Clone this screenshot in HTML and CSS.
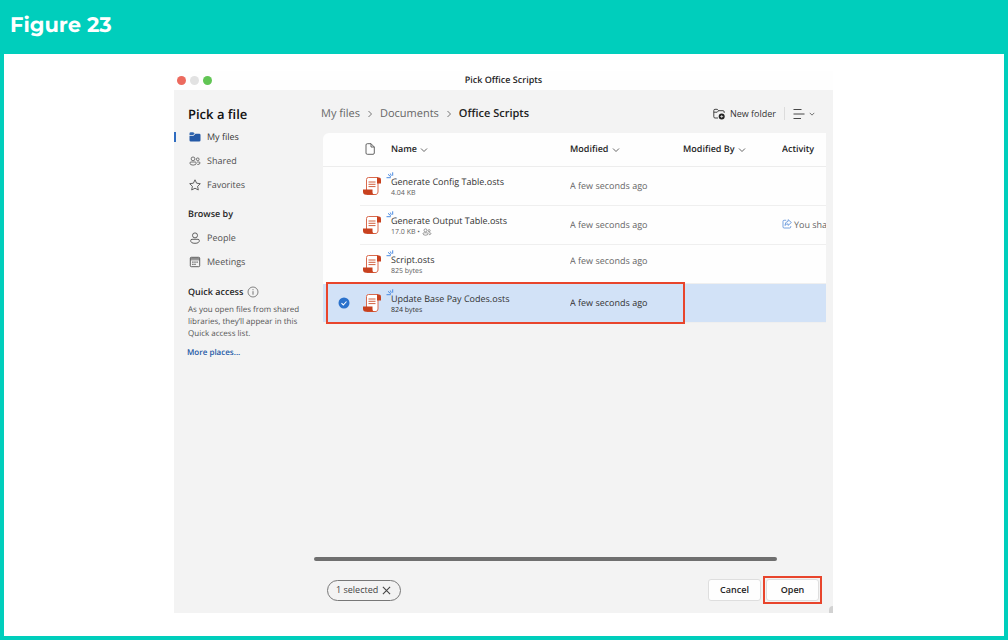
FILE: index.html
```html
<!DOCTYPE html>
<html lang="en">
<head>
<meta charset="utf-8">
<title>Figure 23</title>
<meta name="viewport" content="width=device-width, initial-scale=1">
<link rel="stylesheet" href="styles.css">
</head>
<body>
<svg class="defs" width="0" height="0" aria-hidden="true">
  <symbol id="chevron" viewBox="0 0 8 8"><path d="M1 2.500 4 5.500 7 2.500" fill="none" stroke="currentColor" stroke-width=".9"/></symbol>
  <symbol id="script" viewBox="0 0 20 20">
    <path d="M4.500 14V3.500q0-2 2-2H16v14.500q0 2-2 2.500H5z" fill="#fff" stroke="#d9694c" stroke-width="1"/>
    <path d="M15 1.500h2q2 0 2 2v4H15z" fill="#c8411f"/>
    <path d="M1 13.500h9.500v2.500q0 2.800 2.800 2.800H4q-3 0-3-3z" fill="#c8411f"/>
    <path d="M6.500 6h7M6.500 8.300h7M6.500 10.600h7" stroke="#d0603f" stroke-width="1"/>
  </symbol>
  <symbol id="spark" viewBox="0 0 8 8"><path d="M.5 5.700h4.300M2 2.300l2.800 2.500M4.300 1.500l1 2.300M6.700.3v3.400" fill="none" stroke="#4a8ae0" stroke-width="1"/></symbol>
  <symbol id="people" viewBox="0 0 14 12"><g fill="none" stroke="currentColor" stroke-width=".9"><circle cx="4.700" cy="3.500" r="2.200"/><circle cx="10.200" cy="4" r="1.600"/><path d="M2.300 7.200h5q1.200 0 1.200 1.200 0 2.400-3.700 2.400T1 8.400q0-1.200 1.300-1.200zM9.500 7.200h2q1.400 0 1.400 1.100 0 1.800-3.200 1.800"/></g></symbol>
</svg>
<main class="figure">
  <h1 class="figure-title">Figure 23</h1>
  <div class="figure-body">
    <section class="window" aria-label="Pick Office Scripts">
      <header class="titlebar">
        <div class="lights"><i class="light red"></i><i class="light gray"></i><i class="light green"></i></div>
        <div class="window-title">Pick Office Scripts</div>
      </header>
      <div class="content">
        <nav class="sidebar">
          <h2 class="side-title">Pick a file</h2>
          <a class="nav-link current" href="#"><svg class="nav-icon" viewBox="0 0 12 12"><path d="M.5 2.500q0-1.300 1.300-1.300h2.400L5.700 2.600 4.200 4H.5z" fill="#2f66b0"/><path d="M.5 4.700h4L6.500 2.700h3.700q1.300 0 1.300 1.300v5.200q0 1.300-1.300 1.300H1.800Q.5 10.500.5 9.200z" fill="#2459a6"/></svg>My files</a>
          <a class="nav-link" href="#"><svg class="nav-icon" viewBox="0 0 14 12"><use href="#people"/></svg>Shared</a>
          <a class="nav-link" href="#"><svg class="nav-icon" viewBox="0 0 12 12"><path d="m6 .8 1.600 3.400 3.700.5-2.700 2.600.7 3.700L6 9.200 2.700 11l.7-3.700L.7 4.700l3.700-.5z" fill="none" stroke="currentColor" stroke-width=".9" stroke-linejoin="round"/></svg>Favorites</a>
          <h3 class="side-heading">Browse by</h3>
          <a class="nav-link" href="#"><svg class="nav-icon" viewBox="0 0 12 12"><g fill="none" stroke="currentColor" stroke-width=".9"><circle cx="6" cy="3.400" r="2.500"/><path d="M3 7.300h6q1.300 0 1.300 1.300 0 2.700-4.300 2.700T1.700 8.600Q1.700 7.300 3 7.300z"/></g></svg>People</a>
          <a class="nav-link" href="#"><svg class="nav-icon" viewBox="0 0 12 12"><rect x="1.300" y="1.300" width="9.400" height="9.400" rx="1" fill="none" stroke="currentColor" stroke-width=".9"/><path d="M1.300 2.300h9.400M1.300 3.800h9.400" stroke="currentColor" stroke-width=".8"/><path d="M3.300 6.200h5.500M3.300 8.400h3.800" stroke="currentColor" stroke-width="1.200" stroke-dasharray="1.200 .9"/></svg>Meetings</a>
          <h3 class="side-heading quick">Quick access <svg class="info" viewBox="0 0 12 12"><circle cx="6" cy="6" r="5" fill="none" stroke="currentColor" stroke-width=".8"/><path d="M6 5.200v3.500M6 3.200v1" stroke="currentColor" stroke-width=".9"/></svg></h3>
          <p class="hint">As you open files from shared libraries, they’ll appear in this Quick access list.</p>
          <a class="more" href="#">More places...</a>
        </nav>
        <div class="main">
          <div class="toolbar">
            <nav class="crumbs" aria-label="Breadcrumb">
              <a href="#">My files</a><svg class="sep" viewBox="0 0 8 8"><path d="M2.500 1 5.500 4 2.500 7" fill="none" stroke="currentColor" stroke-width=".9"/></svg>
              <a href="#">Documents</a><svg class="sep" viewBox="0 0 8 8"><path d="M2.500 1 5.500 4 2.500 7" fill="none" stroke="currentColor" stroke-width=".9"/></svg>
              <span class="here">Office Scripts</span>
            </nav>
            <div class="actions">
              <button class="tool" type="button"><svg class="nav-icon" viewBox="0 0 12 12"><path d="M5 10H2Q.8 10 .8 8.800V2.500Q.8 1.300 2 1.300h2.200L5.700 2.700H10q1.200 0 1.200 1.200v1M.8 4.200h3.400l1.500-1.500" fill="none" stroke="currentColor" stroke-width=".9"/><circle cx="8.700" cy="8.500" r="3" fill="#222"/><path d="M8.700 7v3M7.200 8.500h3" stroke="#eee" stroke-width=".7"/></svg>New folder</button>
              <button class="tool view" type="button" aria-label="View options"><svg class="lines" viewBox="0 0 12 12"><path d="M.5 1.500h8M.5 6h11M.5 10.500h7.500" stroke="currentColor" stroke-width=".9"/></svg><svg class="tiny" viewBox="0 0 8 8"><use href="#chevron"/></svg></button>
            </div>
          </div>
          <div class="panel">
            <table class="files">
              <colgroup><col class="c-check"><col class="c-icon"><col class="c-name"><col class="c-mod"><col class="c-by"><col></colgroup>
              <thead><tr>
                <th></th>
                <th><svg class="page" viewBox="0 0 12 12"><path d="M2 2q0-1.300 1.300-1.300H7L10.300 4v6q0 1.300-1.300 1.300H3.300Q2 11.300 2 10zM7 .7V4h3.300" fill="none" stroke="currentColor" stroke-width=".9"/></svg></th>
                <th>Name <svg class="sort" viewBox="0 0 8 8"><use href="#chevron"/></svg></th>
                <th>Modified <svg class="sort" viewBox="0 0 8 8"><use href="#chevron"/></svg></th>
                <th>Modified By <svg class="sort" viewBox="0 0 8 8"><use href="#chevron"/></svg></th>
                <th>Activity</th>
              </tr></thead>
              <tbody>
                <tr><td></td><td><svg class="script"><use href="#script"/></svg></td><td class="name"><svg class="spark"><use href="#spark"/></svg><div class="file">Generate Config Table.osts</div><div class="meta">4.04 KB</div></td><td>A few seconds ago</td><td></td><td></td></tr>
                <tr><td></td><td><svg class="script"><use href="#script"/></svg></td><td class="name"><svg class="spark"><use href="#spark"/></svg><div class="file">Generate Output Table.osts</div><div class="meta">17.0 KB • <svg class="shared"><use href="#people"/></svg></div></td><td>A few seconds ago</td><td></td><td class="activity"><svg class="share" viewBox="0 0 12 12"><path d="M5 1.500H2.500Q1.200 1.500 1.200 2.800v6.700q0 1.300 1.300 1.300h6.700q1.300 0 1.300-1.300V8.500" fill="none" stroke="#4d86d6" stroke-width=".9"/><path d="M7.300.8v2Q3.600 3.300 3.500 7.800 5 5.800 7.300 5.800v1.900l4-3.500z" fill="none" stroke="#4d86d6" stroke-width=".9" stroke-linejoin="round"/></svg>You sha</td></tr>
                <tr><td></td><td><svg class="script"><use href="#script"/></svg></td><td class="name"><svg class="spark"><use href="#spark"/></svg><div class="file">Script.osts</div><div class="meta">825 bytes</div></td><td class="high">A few seconds ago</td><td></td><td></td></tr>
                <tr class="selected"><td class="check"><svg class="tick" viewBox="0 0 12 12"><circle cx="6" cy="6" r="5.500" fill="#2b72cc"/><path d="M3.500 6.200 5.300 8 8.500 4.500" fill="none" stroke="#fff" stroke-width="1.100"/></svg></td><td><svg class="script"><use href="#script"/></svg></td><td class="name"><svg class="spark"><use href="#spark"/></svg><div class="file">Update Base Pay Codes.osts</div><div class="meta">824 bytes</div></td><td>A few seconds ago</td><td></td><td></td></tr>
              </tbody>
            </table>
            <div class="callout-row"></div>
          </div>
          <div class="scroll"><div class="thumb"></div></div>
          <footer class="footer">
            <button class="pill" type="button">1 selected <svg class="close" viewBox="0 0 10 10"><path d="m1 1 8 8M9 1 1 9" stroke="currentColor" stroke-width="1.200"/></svg></button>
            <div class="buttons">
              <button class="btn" type="button">Cancel</button>
              <div class="callout-open"><button class="btn" type="button">Open</button></div>
            </div>
          </footer>
        </div>
      </div>
    </section>
  </div>
</main>
</body>
</html>
```
FILE: styles.css
```css
* { box-sizing: border-box; }
body { margin: 0; background: #00cebc; color: #242424; font: 9px/12px "Open Sans", "Noto Sans", sans-serif; text-rendering: geometricPrecision; }
h1, h2, h3, p { margin: 0; }
a { color: inherit; text-decoration: none; }
button { font: inherit; color: inherit; padding: 0; border: 0; background: none; cursor: pointer; }
svg { flex: none; }
.defs { position: absolute; }
.figure { min-height: 100vh; display: flex; flex-direction: column; padding: 0 4px 4px; }
.figure-title { padding: 11px 6px 13px; color: #fff; font: 700 21px/30px Montserrat, Inter, sans-serif; }
.figure-body { flex: 1; display: flex; justify-content: center; padding: 17px 17px 23px 16px; background: #fff; }
.window { position: relative; flex: 1; max-width: 659px; display: flex; flex-direction: column; background: #f3f3f3; }
.window::after { content: ""; position: absolute; right: 0; bottom: 0; width: 4px; height: 7px; border-radius: 4px 0 0; background: #d2d2d2; }
.titlebar { height: 19px; display: grid; grid-template-columns: 1fr auto 1fr; align-items: center; padding: 0 3px 1px; background: #fefefe; }
.lights { display: flex; gap: 4px; }
.light { width: 9px; height: 9px; border-radius: 50%; }
.red { background: #ec6a5e; }
.gray { background: #e2e2e2; }
.green { background: #61c554; }
.window-title { font-weight: 600; }
.content { flex: 1; display: flex; }

.sidebar { width: 140px; padding: 14px 0 0; }
.side-title { padding: 0 14px; margin-bottom: 1px; font-size: 13px; line-height: 20px; font-weight: 600; color: #111; }
.nav-link { display: flex; align-items: center; gap: 6px; height: 24px; padding-left: 15px; color: #505050; }
.nav-icon { width: 12px; height: 12px; }
.current { position: relative; color: #333; }
.current::before { content: ""; position: absolute; left: 0; top: 7px; width: 2px; height: 10px; background: #2f6cc0; }
.side-heading { display: flex; align-items: center; gap: 4px; padding: 11px 14px 6px; font-size: 9px; line-height: 12px; font-weight: 600; }
.quick { padding: 12px 14px 6px; }
.info { width: 12px; height: 12px; color: #666; }
.hint { padding: 0 14px; font-size: 8px; line-height: 12px; color: #555; }
.more { display: block; padding: 7px 13px; font-size: 8px; font-weight: 600; color: #2459a6; }

.main { flex: 1; min-width: 0; display: flex; flex-direction: column; }
.toolbar { display: flex; justify-content: space-between; align-items: center; height: 43px; padding: 4px 18px 0 7px; }
.crumbs { display: flex; align-items: center; gap: 6px; font-size: 11px; line-height: 16px; color: #666; }
.sep { width: 8px; height: 8px; }
.here { font-weight: 600; color: #222; }
.actions { display: flex; align-items: center; color: #333; }
.tool { display: flex; align-items: center; gap: 5px; }
.view { margin-left: 8px; padding-left: 8px; height: 13px; border-left: 1px solid #dcdcdc; gap: 4px; }
.lines { width: 12px; height: 12px; }
.tiny { width: 6px; height: 6px; }

.panel { position: relative; margin: 0 7px 0 9px; background: #fefefe; border-radius: 6px 0 0 6px; }
.files { width: 100%; table-layout: fixed; border-collapse: collapse; }
.c-check { width: 37px; }
.c-icon { width: 31px; }
.c-name { width: 179px; }
.c-mod { width: 113px; }
.c-by { width: 99px; }
.files th, .files td { padding: 0; text-align: left; white-space: nowrap; overflow: hidden; }
.files th { height: 33px; font-weight: 600; border-bottom: 1px solid #ededed; }
.files td { height: 39px; color: #666; border-bottom: 1px solid #efefef; }
.files td:first-child { border-bottom-color: transparent; }
.sort { width: 8px; height: 8px; vertical-align: -2px; margin-left: 1px; color: #555; }
.page { display: block; width: 12px; height: 12px; margin-left: 4px; color: #555; }
.script { display: block; width: 20px; height: 20px; margin-left: 2px; }
.files .name { position: relative; overflow: visible; padding-top: 2px; }
.spark { position: absolute; left: -5px; top: 5px; width: 8px; height: 8px; }
.file { color: #333; line-height: 13px; }
.meta { font-size: 7px; line-height: 11px; color: #606060; }
.shared { width: 10px; height: 8px; vertical-align: -2px; }
.activity { color: #555; }
.share { width: 10px; height: 10px; margin-right: 2px; vertical-align: -1px; }
.files .high { padding-bottom: 5px; }
.selected { background: #d2e2f7; }
.files .selected td { color: #333; }
.files .selected .meta { color: #333; }
.tick { display: block; width: 12px; height: 12px; margin-left: 15px; }
.callout-row { position: absolute; left: 3px; bottom: -1px; width: 359px; height: 42px; border: 2px solid #e8452c; pointer-events: none; }

.scroll { margin-top: auto; padding-right: 56px; }
.thumb { height: 4px; border-radius: 2px; background: #6f6f6f; }
.footer { display: flex; align-items: center; justify-content: space-between; padding: 15px 11px 9px 13px; }
.pill { display: flex; align-items: center; gap: 4px; height: 21px; padding: 0 9px 0 8px; border: 1px solid #777; border-radius: 11px; color: #444; }
.close { width: 9px; height: 9px; }
.buttons { display: flex; align-items: center; gap: 2px; }
.btn { width: 53px; height: 22px; border: 1px solid #dedede; border-radius: 3px; background: #fefefe; font-weight: 600; }
.callout-open { display: flex; padding: 1px; border: 2px solid #e8452c; }
```
